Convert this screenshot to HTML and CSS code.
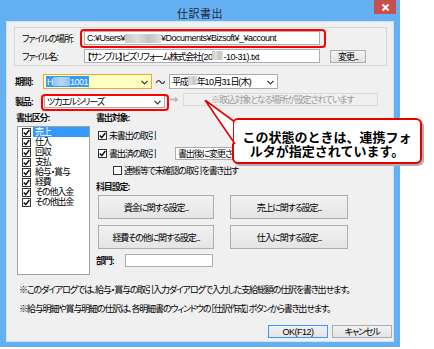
FILE: index.html
```html
<!DOCTYPE html>
<html lang="ja">
<head>
<meta charset="utf-8">
<title>仕訳書出</title>
<link rel="stylesheet" href="styles.css">
</head>
<body>
<div class="window">
  <div class="titlebar">
    <div class="title">仕訳書出</div>
    <div class="close"><svg width="9" height="9" viewBox="0 0 9 9"><path d="M1.5 1.5 L7.5 7.5 M7.5 1.5 L1.5 7.5" stroke="#fff" stroke-width="2"/></svg></div>
  </div>
  <div class="client">
    <div class="group">
      <div class="grow">
        <span class="glabel">ファイルの場所:</span>
        <span class="field lat">C:¥Users¥<span class="blur b1"></span>¥Documents¥Bizsoft¥_¥account</span>
      </div>
      <div class="grow">
        <span class="glabel">ファイル名:</span>
        <span class="field">【サンプル】ビズリフォーム株式会社<span class="lat">(20<span class="blur b2"></span>-10-31).txt</span></span>
        <span class="btn btn-change">変更...</span>
      </div>
    </div>

    <div class="row row-period">
      <span class="rlabel bold">期間:</span>
      <span class="combo combo-focus"><span class="sel lat">H<span class="blur b3"></span>1001</span><span class="arrow"><svg width="7" height="5" viewBox="0 0 7 5"><path d="M0.5 0.8 L3.5 3.8 L6.5 0.8" fill="none" stroke="#333" stroke-width="1.2"/></svg></span></span>
      <span class="tilde">〜</span>
      <span class="combo combo2"><span class="ctext">平成<span class="blur b4"></span>年<span class="lat">10</span>月<span class="lat">31</span>日<span class="lat">(</span>木<span class="lat">)</span></span><span class="arrow"><svg width="7" height="5" viewBox="0 0 7 5"><path d="M0.5 0.8 L3.5 3.8 L6.5 0.8" fill="none" stroke="#333" stroke-width="1.2"/></svg></span></span>
    </div>

    <div class="row row-product">
      <span class="rlabel bold">製品:</span>
      <span class="combo combo-product"><span class="ctext">ツカエルシリーズ</span><span class="arrow"><svg width="7" height="5" viewBox="0 0 7 5"><path d="M0.5 0.8 L3.5 3.8 L6.5 0.8" fill="none" stroke="#333" stroke-width="1.2"/></svg></span></span>
      <span class="rarrow"><svg width="9" height="7" viewBox="0 0 9 7"><path d="M0 2.5 H5 V0.5 L8.5 3.5 L5 6.5 V4.5 H0 Z" fill="#b8b8b8"/></svg></span>
      <span class="disabled-field">※取込対象となる場所が設定されています</span>
    </div>

    <div class="lower">
      <div class="lcol">
        <div class="slabel bold">書出区分:</div>
        <div class="listbox">
          <div class="li selected"><span class="cb"><svg width="7" height="7" viewBox="0 0 7 7"><path d="M0.8 3.5 L2.8 5.6 L6.3 1" fill="none" stroke="#111" stroke-width="1.5"/></svg></span><span class="lt">売上</span></div>
          <div class="li"><span class="cb"><svg width="7" height="7" viewBox="0 0 7 7"><path d="M0.8 3.5 L2.8 5.6 L6.3 1" fill="none" stroke="#111" stroke-width="1.5"/></svg></span><span class="lt">仕入</span></div>
          <div class="li"><span class="cb"><svg width="7" height="7" viewBox="0 0 7 7"><path d="M0.8 3.5 L2.8 5.6 L6.3 1" fill="none" stroke="#111" stroke-width="1.5"/></svg></span><span class="lt">回収</span></div>
          <div class="li"><span class="cb"><svg width="7" height="7" viewBox="0 0 7 7"><path d="M0.8 3.5 L2.8 5.6 L6.3 1" fill="none" stroke="#111" stroke-width="1.5"/></svg></span><span class="lt">支払</span></div>
          <div class="li"><span class="cb"><svg width="7" height="7" viewBox="0 0 7 7"><path d="M0.8 3.5 L2.8 5.6 L6.3 1" fill="none" stroke="#111" stroke-width="1.5"/></svg></span><span class="lt">給与・賞与</span></div>
          <div class="li"><span class="cb"><svg width="7" height="7" viewBox="0 0 7 7"><path d="M0.8 3.5 L2.8 5.6 L6.3 1" fill="none" stroke="#111" stroke-width="1.5"/></svg></span><span class="lt">経費</span></div>
          <div class="li"><span class="cb"><svg width="7" height="7" viewBox="0 0 7 7"><path d="M0.8 3.5 L2.8 5.6 L6.3 1" fill="none" stroke="#111" stroke-width="1.5"/></svg></span><span class="lt">その他入金</span></div>
          <div class="li"><span class="cb"><svg width="7" height="7" viewBox="0 0 7 7"><path d="M0.8 3.5 L2.8 5.6 L6.3 1" fill="none" stroke="#111" stroke-width="1.5"/></svg></span><span class="lt">その他出金</span></div>
        </div>
      </div>
      <div class="rcol">
        <div class="slabel bold">書出対象:</div>
        <div class="check c1"><span class="cb"><svg width="7" height="7" viewBox="0 0 7 7"><path d="M0.8 3.5 L2.8 5.6 L6.3 1" fill="none" stroke="#111" stroke-width="1.5"/></svg></span><span>未書出の取引</span></div>
        <div class="check c2"><span class="cb"><svg width="7" height="7" viewBox="0 0 7 7"><path d="M0.8 3.5 L2.8 5.6 L6.3 1" fill="none" stroke="#111" stroke-width="1.5"/></svg></span><span class="c2t">書出済の取引</span><span class="combo combo-after"><span class="ctext">書出後に変更されたもの</span></span></div>
        <div class="check c3"><span class="cb empty"></span><span>連帳等で未確認の取引を書き出す</span></div>
        <div class="slabel bold s2">科目設定:</div>
        <div class="btngrid">
          <span class="btn bigbtn">資金に関する設定...</span>
          <span class="btn bigbtn">売上に関する設定...</span>
          <span class="btn bigbtn">経費その他に関する設定...</span>
          <span class="btn bigbtn">仕入に関する設定...</span>
        </div>
        <div class="dept"><span class="bold">部門:</span><span class="field dept-field"></span></div>
      </div>
    </div>

    <div class="note n1">※このダイアログでは、給与・賞与の取引入力ダイアログで入力した支給総額の仕訳を書き出せます。</div>
    <div class="note n2">※給与明細や賞与明細の仕訳は、各明細書のウィンドウの［仕訳作成］ボタンから書き出せます。</div>

    <div class="footer">
      <span class="btn fbtn ok lat">OK(F12)</span>
      <span class="btn fbtn">キャンセル</span>
    </div>
  </div>

  <div class="hl hl-path"></div>
  <div class="hl hl-product"></div>

  <div class="callout">この状態のときは、連携フォ<br>ルタが指定されています。</div>
  <svg class="pointer" width="40" height="50" viewBox="0 0 40 50"><polygon points="5,0 33,20 33,44" fill="#fff"/><polyline points="33.5,21 5,0 35,44" fill="none" stroke="#e60000" stroke-width="1.6"/></svg>
</div>
</body>
</html>
```

FILE: styles.css
```css
* { box-sizing: border-box; }
html, body { margin: 0; padding: 0; background: #fff; }
body {
  font-family: "Liberation Sans", "Noto Sans CJK JP", sans-serif;
  font-size: 9px;
  letter-spacing: -1.15px;
  font-feature-settings: "palt";
  color: #000;
  width: 434px;
  height: 349px;
  overflow: hidden;
}
.lat { letter-spacing: -0.5px; }
.window {
  position: relative;
  width: 400px;
  height: 347px;
  background: #65b0f3;
  padding: 0 6px 5px 6px;
  display: flex;
  flex-direction: column;
}
.titlebar {
  height: 21px;
  display: flex;
  align-items: center;
  justify-content: center;
  position: relative;
}
.title {
  font-family: "Noto Sans CJK JP", sans-serif;
  font-size: 11px;
  color: #1b2a3a;
  padding-top: 4px;
  letter-spacing: 0.5px;
}
.close {
  position: absolute;
  right: -2px;
  top: 0;
  width: 22px;
  height: 14px;
  background: #c7504f;
  display: flex;
  align-items: center;
  justify-content: center;
}
.client {
  flex: 1;
  background: #f0f0f0;
  border: 1px solid #cfe3f5;
  display: flex;
  flex-direction: column;
  position: relative;
}
.group {
  margin: 5px 6px 0 7px;
  height: 39px;
  border: 1px solid #d6d6d6;
  padding: 3px 0 0 7px;
  display: flex;
  flex-direction: column;
  gap: 4px;
}
.grow { display: flex; align-items: center; height: 14px; }
.glabel { width: 62px; white-space: nowrap; }
.field {
  display: flex;
  align-items: center;
  width: 236px;
  height: 14px;
  border: 1px solid #abadb3;
  background: #fff;
  padding-left: 2px;
  white-space: nowrap;
  overflow: hidden;
}
.blur {
  display: inline-block;
  height: 9px;
  background: linear-gradient(90deg, #c8c8c8, #dedede, #c4c4c4, #e0e0e0);
}
.b1 { width: 36px; }
.b2 { width: 11px; }
.b3 { width: 17px; background: linear-gradient(90deg, #8ec3f7, #b5d6f8, #8ec3f7); }
.b4 { width: 9px; }
.btn {
  display: flex;
  align-items: center;
  justify-content: center;
  border: 1px solid #adadad;
  background: linear-gradient(#f2f2f2, #e4e4e4);
  white-space: nowrap;
}
.btn-change { margin-left: 10px; width: 36px; height: 13px; }

.row { display: flex; align-items: center; margin-left: 8px; }
.row-period { margin-top: 8px; height: 15px; }
.row-product { margin-top: 6px; height: 13px; }
.rlabel { width: 28px; }
.bold { font-weight: 700; color: #111; }
.combo {
  display: flex;
  align-items: center;
  justify-content: space-between;
  height: 15px;
  border: 1px solid #acacac;
  background: #fff;
  padding: 0 3px 0 2px;
  white-space: nowrap;
}
.combo-focus {
  width: 109px;
  border-color: #e8a93a;
  background: #ffffc4;
}
.sel {
  background: #3399ff;
  color: #fff;
  display: flex;
  align-items: center;
  height: 11px;
  padding: 0 1px;
}
.tilde { width: 17px; text-align: center; font-size: 10px; letter-spacing: 0; }
.combo2 { width: 109px; }
.combo-product { width: 121px; height: 13px; margin-left: 1px; }
.rarrow { width: 18px; display: flex; justify-content: center; margin-top: -4px; }
.disabled-field {
  width: 195px;
  height: 13px;
  margin-top: -5px;
  border: 1px solid #d9d9d9;
  background: #f0f0f0;
  color: #9a9a9a;
  padding-left: 27px;
  display: flex;
  align-items: center;
  white-space: nowrap;
}

.lower { display: flex; margin-top: 5px; }
.lcol { margin-left: 9px; width: 80px; }
.slabel { height: 11px; line-height: 11px; white-space: nowrap; }
.listbox {
  margin-top: 2px;
  margin-left: 1px;
  width: 73px;
  height: 149px;
  background: #fff;
  border: 1px solid #a0a0a0;
  padding: 0 0 0 4px;
}
.li { display: flex; align-items: center; height: 10px; }
.li .lt { padding: 0 2px; height: 10px; line-height: 10px; flex: 1; }
.li.selected .lt { background: #3399ff; color: #fff; }
.cb {
  width: 9px;
  height: 9px;
  border: 1px solid #333;
  background: #fff;
  display: flex;
  align-items: center;
  justify-content: center;
  margin-right: 2px;
  flex: none;
}
.rcol { margin-left: 0; flex: 1; }
.check { display: flex; align-items: center; margin-left: 2px; white-space: nowrap; }
.c1 { margin-top: 5px; height: 12px; }
.c2 { margin-top: 6px; height: 13px; }
.c2t { width: 66px; }
.combo-after { width: 130px; height: 13px; }
.c3 { margin-top: 4px; margin-left: 17px; height: 12px; }
.s2 { margin-top: 6px; }
.btngrid {
  display: grid;
  grid-template-columns: 116px 118px;
  grid-auto-rows: 24px;
  column-gap: 16px;
  row-gap: 6px;
  margin: 2px 0 0 2px;
}
.bigbtn { height: 24px; }
.dept { display: flex; align-items: center; margin-top: 5px; height: 13px; }
.dept .bold { width: 29px; }
.dept-field { width: 88px; height: 13px; }

.note { margin-left: 12px; white-space: nowrap; height: 12px; line-height: 12px; }
.n1 { margin-top: 9px; }
.n2 { margin-top: 7px; }
.footer { display: flex; justify-content: flex-end; gap: 4px; margin: 10px 1px 0 0; }
.fbtn { width: 60px; height: 13px; }
.ok { border-color: #3399ff; }

.hl {
  position: absolute;
  border: 2.5px solid #ff0000;
  border-radius: 4px;
}
.hl-path { left: 80px; top: 29px; width: 246px; height: 19px; }
.hl-product { left: 41px; top: 94px; width: 128px; height: 17px; }

.callout {
  position: absolute;
  left: 232px;
  top: 118px;
  width: 190px;
  height: 46px;
  background: #fff;
  border: 2px solid #e60000;
  border-radius: 6px;
  box-shadow: 2px 2px 0 #b0b0b0;
  font-family: "Noto Sans CJK JP", sans-serif;
  font-size: 13px;
  font-weight: 700;
  letter-spacing: 0;
  color: #000;
  text-align: center;
  line-height: 14px;
  padding-top: 10px;
  font-feature-settings: normal;
  white-space: nowrap;
}
.pointer {
  position: absolute;
  left: 200px;
  top: 100px;
}
```
